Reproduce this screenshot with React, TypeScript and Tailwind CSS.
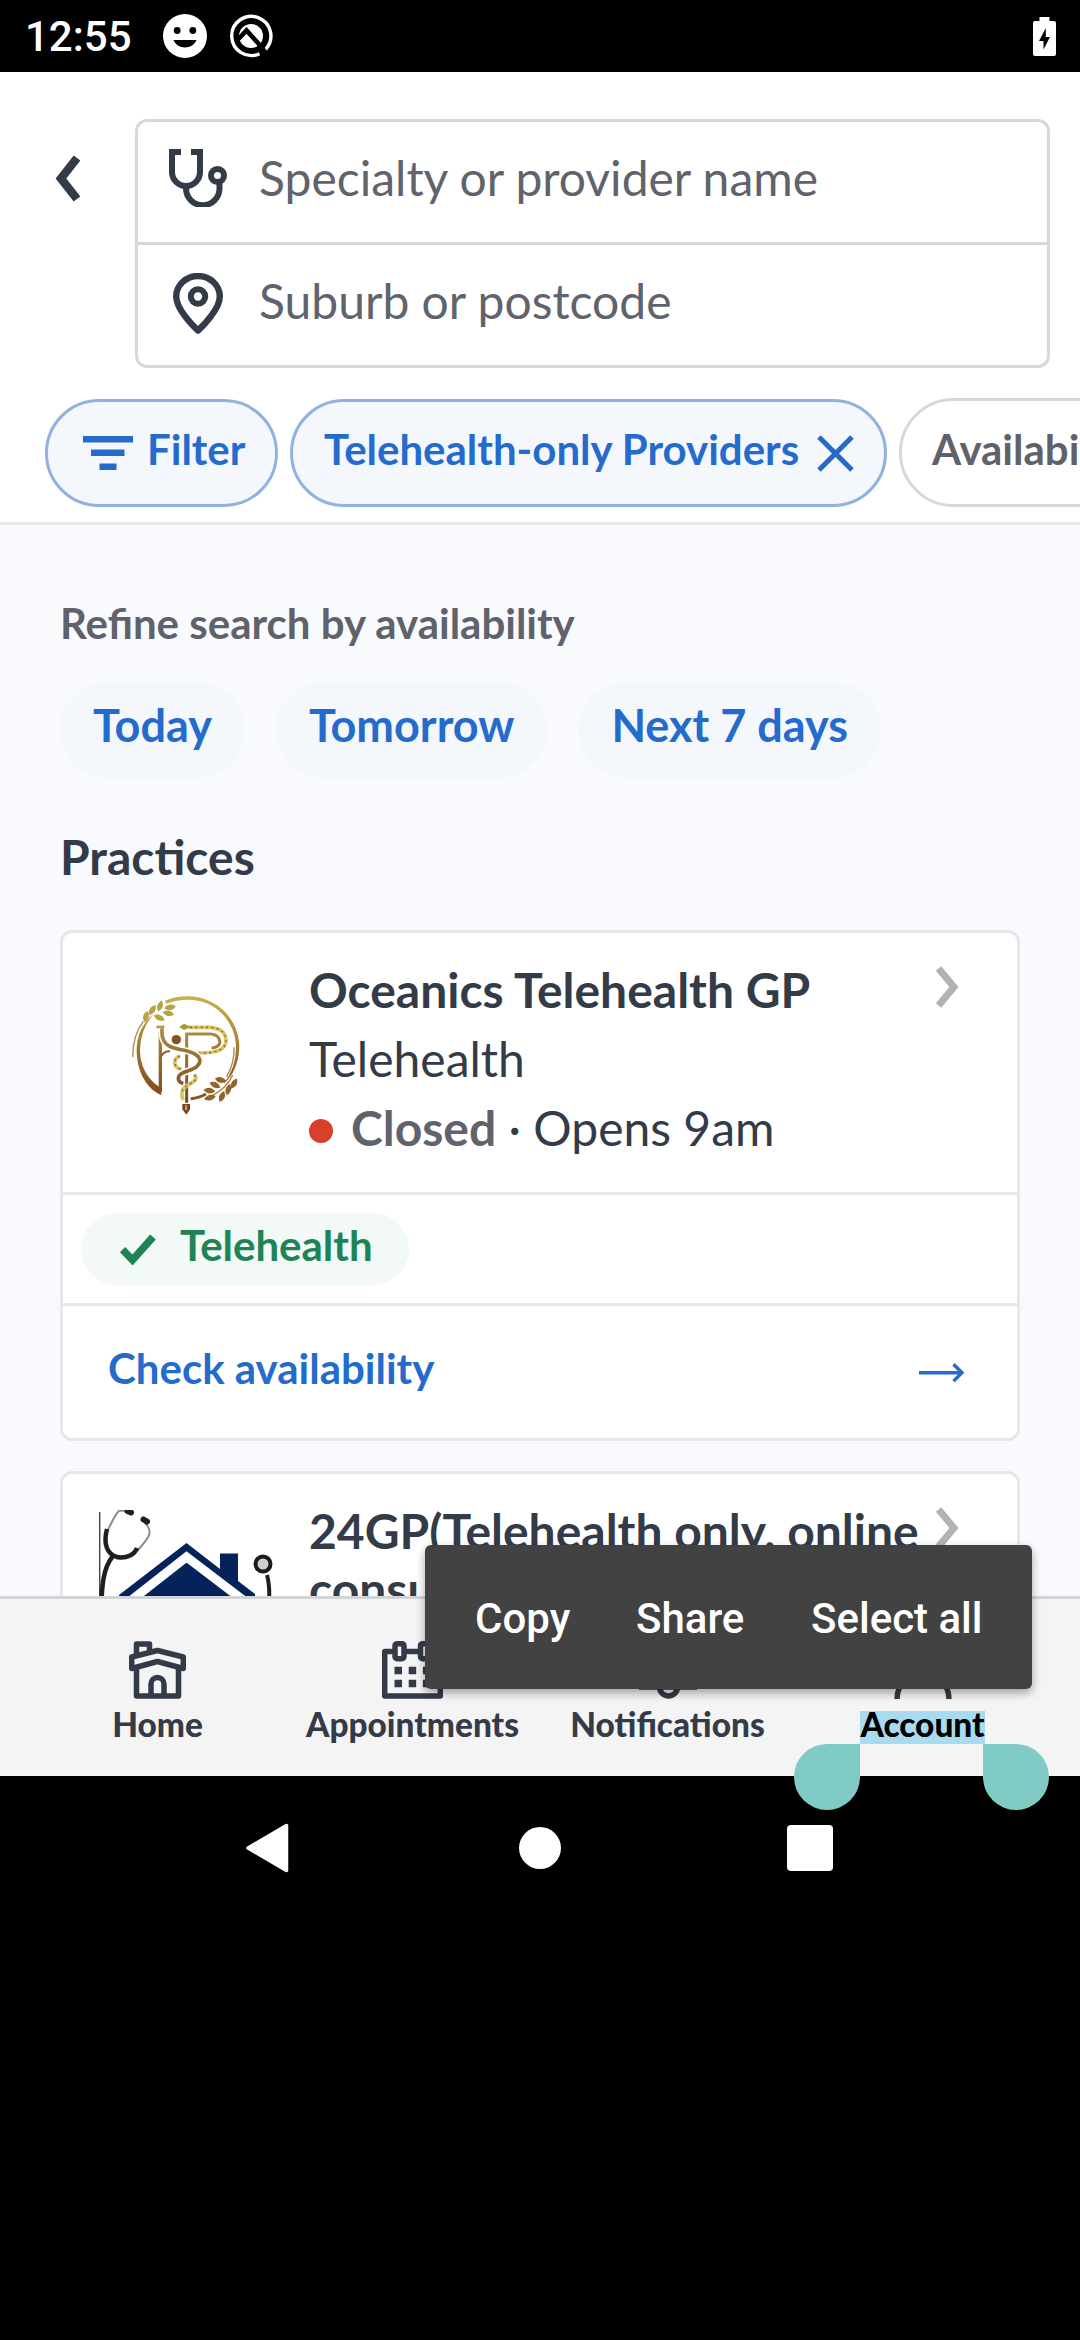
import React from 'react';

const lato = "font-['Lato',sans-serif]";

function StatusBar() {
  return (
    <div className="flex h-[72px] items-center bg-black pl-[25px] pr-6 text-white">
      <span className="mt-[2px] w-[106px] whitespace-nowrap font-['Roboto',sans-serif] text-[42px] font-medium leading-[72px]">12:55</span>
      <svg className="ml-8 h-11 w-11" viewBox="0 0 44 44">
        <circle cx="22" cy="22" r="22" fill="#fff" />
        <circle cx="14.2" cy="16.5" r="3.4" fill="#000" />
        <circle cx="29.8" cy="16.5" r="3.4" fill="#000" />
        <path d="M10.5 26h23a12 10.5 0 0 1-23 0z" fill="#000" />
      </svg>
      <svg className="ml-[22px] h-11 w-11" viewBox="0 0 44 44" fill="none">
        <path d="M36.600 35.300A19.600 19.600 0 1 0 30.500 39.700" stroke="#fff" strokeWidth="3.400" />
        <circle cx="22" cy="22" r="12" fill="#fff" />
        <path d="M9 25.500l8.500-9L33.500 34" stroke="#000" strokeWidth="4.600" />
        <path d="M30 31l5 6" stroke="#000" strokeWidth="5" />
      </svg>
      <svg className="ml-auto h-[39px] w-[23px]" viewBox="0 0 23 39">
        <path d="M6.500 0h10v4H21a2 2 0 0 1 2 2v31a2 2 0 0 1-2 2H2a2 2 0 0 1-2-2V6a2 2 0 0 1 2-2h4.500z" fill="#fff" />
        <path d="M12.800 11L6 24h4.500v8.500L17 20h-4.200z" fill="#000" />
      </svg>
    </div>
  );
}

function Header() {
  return (
    <header className="flex h-[453px] flex-col overflow-hidden border-b-[3px] border-[#e7e8ed] bg-white pt-[47px]">
      <div className="flex">
        <svg className="ml-[55px] mt-9 h-[47px] w-[25px]" viewBox="0 0 25 47" fill="none">
          <path d="M22 3L6 23.500 22 44" stroke="#333b49" strokeWidth="8.500" />
        </svg>
        <div className="ml-[55px] h-[249px] w-[915px] rounded-xl border-[3px] border-[#d8d8d8] text-[48px] text-[#60636c]">
          <div className="flex h-[123px] items-center border-b-[3px] border-[#d8d8d8] pb-2 pl-[31px]">
            <svg className="h-[58px] w-[58px]" viewBox="0 0 58 58" fill="none" stroke="#333b49" strokeWidth="6">
              <path d="M12 3H3v20a14 14 0 0 0 28 0V3h-9" />
              <path d="M17 37v2.500a15.500 15.500 0 0 0 33.500 0V34" />
              <circle cx="48.500" cy="26.500" r="6.500" />
            </svg>
            <span className="ml-8 whitespace-nowrap">Specialty or provider name</span>
          </div>
          <div className="flex h-[120px] items-center pb-[3px] pl-[35px]">
            <svg className="h-[62px] w-[50px]" viewBox="0 0 50 62" fill="none" stroke="#333b49" strokeLinejoin="round">
              <path d="M25 57.500C20 53 3.200 36 3.200 23.500a21.800 20.500 0 0 1 43.600 0C46.800 36 30 53 25 57.500z" strokeWidth="6.400" />
              <circle cx="25" cy="23.500" r="7.200" strokeWidth="6" />
            </svg>
            <span className="-mt-[6px] ml-9 whitespace-nowrap">Suburb or postcode</span>
          </div>
        </div>
      </div>
      <div className="mt-[30px] flex items-end gap-3 pl-[45px] text-[42px] font-bold">
        <div className="flex h-[108px] w-[233px] shrink-0 items-center rounded-full border-[3px] border-[#8fb2e2] bg-[#f4f7fc] pl-[35px] text-[#246bcd]">
          <svg className="h-[34px] w-[50px]" viewBox="0 0 50 34" fill="#246bcd">
            <path d="M0 0h50v6.500H0zM8 13.500h33.500V20H8zM16.500 27.500h17V34h-17z" />
          </svg>
          <span className="-mt-[7px] ml-[14px]">Filter</span>
        </div>
        <div className="flex h-[108px] w-[597px] shrink-0 items-center rounded-full border-[3px] border-[#8fb2e2] bg-[#f4f7fc] pl-[31px] text-[#246bcd]">
          <span className="-mt-[7px] w-[474px] whitespace-nowrap">Telehealth-only Providers</span>
          <svg className="ml-[19px] h-[37px] w-[37px]" viewBox="0 0 37 37">
            <path d="M2 2l33 33M35 2L2 35" stroke="#246bcd" strokeWidth="5" />
          </svg>
        </div>
        <div className="flex h-[109px] w-[330px] shrink-0 items-center rounded-full border-[3px] border-[#d8d8d8] bg-white pb-[6px] pl-[30px] text-[#5f626b]">
          Availability
        </div>
      </div>
    </header>
  );
}

function DayChip({ label }: { label: string }) {
  return (
    <div className="flex h-24 items-center rounded-full bg-[#f4f7fc] px-[33px] pb-[9px] text-[45px] font-bold text-[#246bcd]">{label}</div>
  );
}

function Chevron() {
  return (
    <svg className="absolute right-[57px] top-[33px] h-[42px] w-6" viewBox="0 0 24 42" fill="none">
      <path d="M2.500 2.500L18 21 2.500 39.500" stroke="#b1b2b6" strokeWidth="7" />
    </svg>
  );
}

const goldLeaves = [
  [198, 170, -75],
  [217, 150, -55],
  [240, 138, -72],
  [238, 173, 25],
  [265, 160, 12],
  [270, 142, -8],
];

const bronzeLeaves = [
  [388, 392, 8],
  [405, 375, 25],
  [422, 360, 15],
  [390, 413, -15],
  [426, 410, -68],
  [445, 389, -75],
  [462, 371, -60],
];

function OceanicsLogo() {
  return (
    <svg className="h-[174px] w-[174px] shrink-0" viewBox="57 27 522 522" fill="none">
      <defs>
        <linearGradient id="gold" gradientUnits="userSpaceOnUse" x1="320" y1="110" x2="300" y2="440">
          <stop offset="0" stopColor="#c9b34c" />
          <stop offset="0.5" stopColor="#9d7434" />
          <stop offset="1" stopColor="#78431a" />
        </linearGradient>
      </defs>
      <path d="M255 122Q290 108 325 109A152 154 0 0 1 478 263Q474 335 430 372Q468 325 468 263A143 144 0 0 0 325 119Q290 119 259 131z" fill="url(#gold)" />
      <path d="M222 160Q170 205 170 270C170 340 205 390 244 405V384C210 365 180 325 180 270Q180 210 222 160z" fill="url(#gold)" />
      <path d="M190 184Q158 225 158 292M462 262Q464 310 440 350" stroke="#b08a45" strokeWidth="4" />
      <path d="M241 215V395" stroke="url(#gold)" strokeWidth="10" />
      <path d="M229 201h24" stroke="#b59a42" strokeWidth="8" />
      <path d="M320 428V222H392Q418 224 420 246Q418 262 395 264" stroke="url(#gold)" strokeWidth="9" />
      <path d="M326 202H390Q436 206 438 240C438 270 410 280 352 279M300 288C278 296 278 324 306 328M343 344C364 370 306 370 306 398Q304 410 310 420" stroke="#d6c565" strokeWidth="11" />
      <path d="M330 202H390Q436 206 438 240C438 270 410 280 352 279M300 288C278 296 278 324 306 328M343 344C364 370 306 370 306 398" stroke="#9c6d35" strokeWidth="5" strokeDasharray="6 10" />
      <path d="M246 205V222C248 262 285 266 318 272C362 282 368 304 350 320C330 336 296 334 295 356Q296 368 310 370" stroke="#fff" strokeWidth="20" />
      <path d="M246 205V222C248 262 285 266 318 272C362 282 368 304 350 320C330 336 296 334 295 356Q296 368 310 370" stroke="url(#gold)" strokeWidth="11" />
      <path d="M243 290Q250 274 270 274" stroke="#8d6030" strokeWidth="6" />
      <path d="M297 201l15-10 20 10-20 9z" fill="#a99a35" />
      <circle cx="289" cy="239" r="14" fill="#84531f" />
      <path d="M332 416Q358 414 378 402" stroke="#8a551f" strokeWidth="9" />
      <path d="M307 432h23v16l-11 16-12-16z" fill="#7a471f" />
      <path d="M318 436v14" stroke="#e6cf9a" strokeWidth="4" />
      <path d="M375 415Q435 395 458 345" stroke="#a87c40" strokeWidth="4" />
      <g fill="#b7a440">
        {goldLeaves.map(([x, y, r]) => (
          <path key={x} d="M-18 0Q0-17 18 0Q0 17-18 0z" transform={`translate(${x} ${y}) rotate(${r})`} />
        ))}
      </g>
      <g fill="#94652a">
        {bronzeLeaves.map(([x, y, r]) => (
          <path key={x} d="M-18 0Q0-17 18 0Q0 17-18 0z" transform={`translate(${x} ${y}) rotate(${r})`} />
        ))}
      </g>
    </svg>
  );
}

function HouseLogo() {
  return (
    <svg className="h-[174px] w-[174px] shrink-0" viewBox="0 0 174 174" fill="none">
      <path d="M.700 2v100" stroke="#444" strokeWidth="1.400" />
      <path d="M28 .700H20C15 6 12 14 8 22M46 13c8 8 6 13-8 28" stroke="#8d8d8d" strokeWidth="2" />
      <path d="M8 19C4 34 8 44 18 47C28 49 36 44 38 38M14 46C4 58 3 75 2 100" stroke="#1f1f1f" strokeWidth="4.500" />
      <path d="M28.500 1l3.500 1.500M44.500 9.500l3.500 2" stroke="#1f1f1f" strokeWidth="6" strokeLinecap="round" />
      <path d="M20 85L87.500 33L121 59V43.500h18V71l17 13v90H20z" fill="#04235a" />
      <path d="M30 92L87.500 47L148 93" stroke="#fff" strokeWidth="9" />
      <circle cx="164" cy="54" r="7.500" fill="#cfcfcf" stroke="#1b1b1b" strokeWidth="4" />
      <path d="M168 65q4 14 1 40" stroke="#1f1f1f" strokeWidth="4" />
    </svg>
  );
}

function Practices() {
  return (
    <main className="h-[1071px] overflow-hidden bg-[#f9fafe] px-[60px]">
      <h2 className="mt-[73px] h-[51px] text-[42px] font-bold leading-[51px] text-[#5f626b]">Refine search by availability</h2>
      <div className="mt-[33px] flex gap-[31px]">
        <DayChip label="Today" />
        <DayChip label="Tomorrow" />
        <DayChip label="Next 7 days" />
      </div>
      <h1 className="mt-[44px] h-[70px] text-[48px] font-bold leading-[70px] text-[#333b49]">Practices</h1>
      <section className="relative mt-[38px] h-[511px] rounded-xl border-[3px] border-[#e7e8ec] bg-white text-[#333b49]">
        <div className="flex h-[262px] border-b-[3px] border-[#e7e8ec] pl-9 pt-9">
          <OceanicsLogo />
          <div className="ml-9 -mt-[14px] text-[48px] leading-[69px]">
            <div className="font-bold">Oceanics Telehealth GP</div>
            <div>Telehealth</div>
            <div className="flex items-center whitespace-pre">
              <span className="mr-[18px] mt-[7px] h-6 w-6 rounded-full bg-[#d9402a]" />
              <span className="font-bold text-[#60636e]">Closed</span> · Opens 9am
            </div>
          </div>
        </div>
        <Chevron />
        <div className="flex h-[111px] items-center border-b-[3px] border-[#e7e8ec] pl-[18px]">
          <div className="flex h-[72px] w-[328px] items-center rounded-full bg-[#f2f9f7] pl-[39px] text-[42px] font-bold text-[#1e8453]">
            <svg className="h-[31px] w-9" viewBox="0 0 36 31" fill="none">
              <path d="M2.500 15.500L12.500 26 33 3" stroke="#1e8453" strokeWidth="7.500" />
            </svg>
            <span className="-mt-[7px] ml-6">Telehealth</span>
          </div>
        </div>
        <div className="flex h-[132px] items-center justify-between pl-[45px] pr-[53px] text-[42px] font-bold text-[#246bcd]">
          <span className="-mt-[7px]">Check availability</span>
          <svg className="h-5 w-[45px]" viewBox="0 0 45 20" fill="none">
            <path d="M0 10.700h42M34.500 2.200l8.500 8.500-8.500 8.500" stroke="#246bcd" strokeWidth="3.400" />
          </svg>
        </div>
      </section>
      <section className="relative mt-[30px] h-[400px] rounded-xl border-[3px] border-[#e7e8ec] bg-white pl-9 pt-9 text-[#333b49]">
        <div className="flex">
          <HouseLogo />
          <div className="ml-9 -mt-[8px] w-[625px] text-[48px] font-bold leading-[57.600px]">24GP(Telehealth only, online consultations)</div>
        </div>
        <Chevron />
      </section>
    </main>
  );
}

const navIcon = 'h-[58px]';

function BottomNav() {
  return (
    <nav className="relative flex h-[180px] border-t-[3px] border-[#d3d4d8] bg-[#f4f4f4] px-[30px] pt-[42px] text-center text-[33.4px] font-black leading-[26px] text-[#333b49]">
      <div className="flex w-[255px] flex-col items-center">
        <svg className={navIcon} width="57" height="58" viewBox="0 0 57 58" fill="none" stroke="#333b49" strokeWidth="5.500" strokeLinejoin="round">
          <path d="M7.500 28V55h42V28M7.500 14V3h13v8" />
          <path d="M2.700 16L28.500 9.500 54.300 16V27.500L28.500 20.500 2.700 27.500z" />
          <path d="M22 55V43a6.500 6.500 0 0 1 13 0V55" />
        </svg>
        <span className="mt-[12px]">Home</span>
      </div>
      <div className="flex w-[255px] flex-col items-center">
        <svg className={navIcon} width="61" height="58" viewBox="0 0 61 58" fill="none" stroke="#333b49" strokeWidth="5.500" strokeLinejoin="round">
          <path d="M12 10.500H2.700V55h55.600V10.500H49M23 10.500h15" />
          <rect x="13" y="2.700" width="9" height="15" rx="2" />
          <rect x="38.500" y="2.700" width="9" height="15" rx="2" />
          <path d="M12.500 29.500h36M12.500 42.500h36" strokeWidth="7.500" strokeDasharray="7.500 6.700" />
        </svg>
        <span className="mt-[12px]">Appointments</span>
      </div>
      <div className="flex w-[255px] flex-col items-center">
        <svg className={navIcon} width="58" height="58" viewBox="0 0 58 58" fill="none" stroke="#333b49" strokeWidth="5.500">
          <path d="M0 46h58M9 46V24a20 20 0 0 1 40 0V46" />
          <path d="M20.500 46a9 9 0 0 0 18 0" />
        </svg>
        <span className="mt-[12px]">Notifications</span>
      </div>
      <div className="flex w-[255px] flex-col items-center">
        <svg className={navIcon} width="58" height="58" viewBox="0 0 58 58" fill="none" stroke="#333b49" strokeWidth="5.500">
          <circle cx="29" cy="15" r="12" />
          <path d="M3 58a26 26 0 0 1 52 0" />
        </svg>
        <span className="mt-[12px] h-[33px] bg-[#a8dbf0] text-black">Account</span>
      </div>
      <div className="absolute left-[794px] top-[145px] h-[66px] w-[66px] rounded-full rounded-tr-none bg-[#80cbc4]" />
      <div className="absolute left-[983px] top-[145px] h-[66px] w-[66px] rounded-full rounded-tl-none bg-[#80cbc4]" />
      <div className="absolute left-[425px] top-[-54px] flex h-36 w-[607px] items-center rounded-md bg-[#424242] pl-[50px] pt-[3px] font-['Roboto',sans-serif] text-[42px] font-medium leading-[50px] text-white shadow-[0_4px_10px_rgba(0,0,0,0.35)]">
        <span className="w-[161px] text-left">Copy</span>
        <span className="w-[175px] text-left">Share</span>
        <span className="whitespace-nowrap">Select all</span>
      </div>
    </nav>
  );
}

function SystemNav() {
  return (
    <div className="flex h-[144px] items-center bg-black pl-[245px]">
      <svg className="h-[50px] w-11" viewBox="0 0 44 50">
        <path d="M41.500 2.500v45L3 25z" fill="#fff" stroke="#fff" strokeWidth="3.500" strokeLinejoin="round" />
      </svg>
      <div className="ml-[230px] h-[42px] w-[42px] rounded-full bg-white" />
      <div className="ml-[226px] h-[46px] w-[46px] rounded bg-white" />
    </div>
  );
}

export default function App() {
  return (
    <div className={`flex h-[2340px] w-[1080px] flex-col overflow-hidden bg-black ${lato}`}>
      <StatusBar />
      <Header />
      <Practices />
      <BottomNav />
      <SystemNav />
    </div>
  );
}
